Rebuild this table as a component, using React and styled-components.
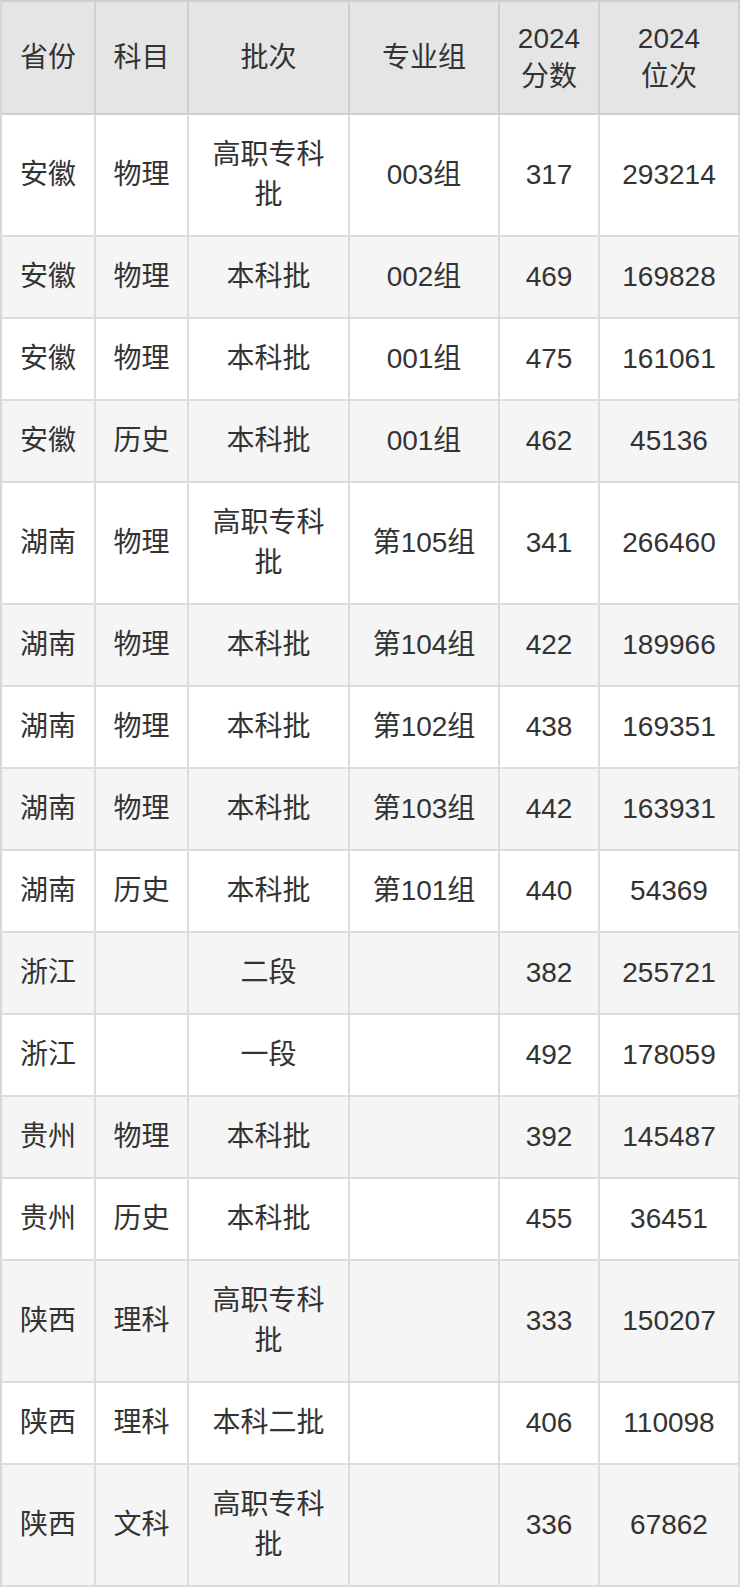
import React from "react";
import styled, { createGlobalStyle } from "styled-components";

const GlobalStyle = createGlobalStyle`
  html, body {
    margin: 0;
    padding: 0;
    background: #ffffff;
  }
  body {
    font-family: "Liberation Sans", Arial, "Noto Sans CJK SC", sans-serif;
    color: #333333;
  }
`;

const Table = styled.table`
  width: 740px;
  table-layout: fixed;
  border-collapse: separate;
  border-spacing: 0;
  border-left: 2px solid #d8d8d8;
  border-top: 2px solid #cfcfcf;
  box-sizing: border-box;
  font-size: 28px;
`;

const Col = styled.col`
  width: ${(p) => p.$w}px;
`;

const HeadCell = styled.th`
  background-color: #e5e5e5;
  font-weight: normal;
  text-align: center;
  vertical-align: middle;
  line-height: 38px;
  padding: 17.5px 14px;
  border-right: 2px solid #cfcfcf;
  border-bottom: 2px solid #cfcfcf;
  box-sizing: border-box;
`;

const Line = styled.span`
  display: block;
`;

const Row = styled.tr`
  background-color: ${(p) => (p.$odd ? "#ffffff" : "#f5f5f5")};
`;

const Cell = styled.td`
  text-align: center;
  vertical-align: middle;
  line-height: 40px;
  padding: 20px 14px;
  border-right: 2px solid #dcdcdc;
  border-bottom: 2px solid #dcdcdc;
  box-sizing: border-box;
`;

const widths = [94, 93, 161, 150, 100, 140];

const headers = [["省份"], ["科目"], ["批次"], ["专业组"], ["2024", "分数"], ["2024", "位次"]];

const rows = [
  ["安徽", "物理", "高职专科批", "003组", "317", "293214"],
  ["安徽", "物理", "本科批", "002组", "469", "169828"],
  ["安徽", "物理", "本科批", "001组", "475", "161061"],
  ["安徽", "历史", "本科批", "001组", "462", "45136"],
  ["湖南", "物理", "高职专科批", "第105组", "341", "266460"],
  ["湖南", "物理", "本科批", "第104组", "422", "189966"],
  ["湖南", "物理", "本科批", "第102组", "438", "169351"],
  ["湖南", "物理", "本科批", "第103组", "442", "163931"],
  ["湖南", "历史", "本科批", "第101组", "440", "54369"],
  ["浙江", "", "二段", "", "382", "255721"],
  ["浙江", "", "一段", "", "492", "178059"],
  ["贵州", "物理", "本科批", "", "392", "145487"],
  ["贵州", "历史", "本科批", "", "455", "36451"],
  ["陕西", "理科", "高职专科批", "", "333", "150207"],
  ["陕西", "理科", "本科二批", "", "406", "110098"],
  ["陕西", "文科", "高职专科批", "", "336", "67862"],
];

export default function App() {
  return (
    <>
      <GlobalStyle />
      <Table>
        <colgroup>
          {widths.map((w, i) => (
            <Col key={i} $w={w} />
          ))}
        </colgroup>
        <thead>
          <tr>
            {headers.map((h, i) => (
              <HeadCell key={i}>
                {h.map((t) => (
                  <Line key={t}>{t}</Line>
                ))}
              </HeadCell>
            ))}
          </tr>
        </thead>
        <tbody>
          {rows.map((r, i) => (
            <Row key={i} $odd={i % 2 === 0}>
              {r.map((c, j) => (
                <Cell key={j}>{c}</Cell>
              ))}
            </Row>
          ))}
        </tbody>
      </Table>
    </>
  );
}
